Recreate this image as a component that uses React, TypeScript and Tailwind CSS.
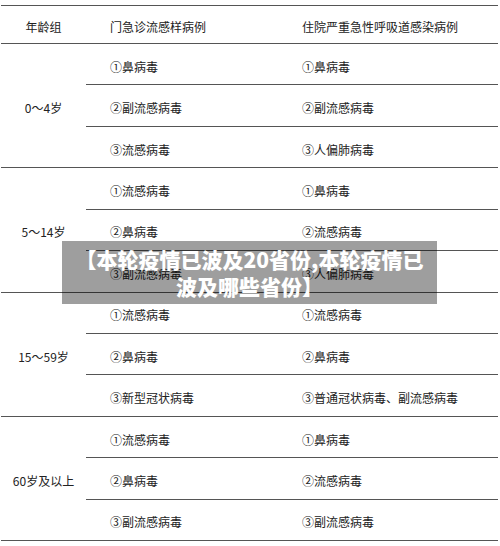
import React from "react";

type Group = { age: string; rows: [string, string][] };

const groups: Group[] = [
  { age: "0～4岁", rows: [["①鼻病毒", "①鼻病毒"], ["②副流感病毒", "②副流感病毒"], ["③流感病毒", "③人偏肺病毒"]] },
  { age: "5～14岁", rows: [["①流感病毒", "①鼻病毒"], ["②鼻病毒", "②流感病毒"], ["③副流感病毒", "③人偏肺病毒"]] },
  { age: "15～59岁", rows: [["①流感病毒", "①流感病毒"], ["②鼻病毒", "②鼻病毒"], ["③新型冠状病毒", "③普通冠状病毒、副流感病毒"]] },
  { age: "60岁及以上", rows: [["①流感病毒", "①鼻病毒"], ["②鼻病毒", "②流感病毒"], ["③副流感病毒", "③副流感病毒"]] },
];

export default function App() {
  return (
    <div
      className="relative w-[500px] h-[546px] bg-white text-[#222] text-[12px] overflow-hidden"
      style={{ fontFamily: '"Noto Sans CJK SC", "Noto Sans", sans-serif' }}
    >
      <div className="ml-[1px] w-[497px] pt-[5px]">
        <div className="flex h-[39px] border-t border-b border-[#555] items-center pt-[4px]">
          <div className="w-[85px] text-center">年龄组</div>
          <div className="w-[192px] pl-[24px]">门急诊流感样病例</div>
          <div className="flex-1 pl-[24px]">住院严重急性呼吸道感染病例</div>
        </div>
        {groups.map((g) => (
          <div key={g.age} className="flex h-[124.3px] border-b border-[#555]">
            <div className="w-[85px] flex items-center justify-center pt-[5px]">{g.age}</div>
            <div className="flex-1 flex flex-col">
              {g.rows.map((r, i) => (
                <div
                  key={i}
                  className={`flex-1 flex items-center pt-[5px] ${i < 2 ? "border-b border-[#555]" : ""}`}
                >
                  <div className="w-[192px] pl-[24px]">{r[0]}</div>
                  <div className="flex-1 pl-[24px]">{r[1]}</div>
                </div>
              ))}
            </div>
          </div>
        ))}
      </div>
      <div className="absolute left-[62px] top-[241px] w-[375px] h-[63px] bg-black/[0.38] flex flex-col items-center justify-center text-white font-black text-[21px] leading-[27px] text-center whitespace-nowrap">
        <div>【本轮疫情已波及20省份,本轮疫情已</div>
        <div>波及哪些省份】</div>
      </div>
    </div>
  );
}
